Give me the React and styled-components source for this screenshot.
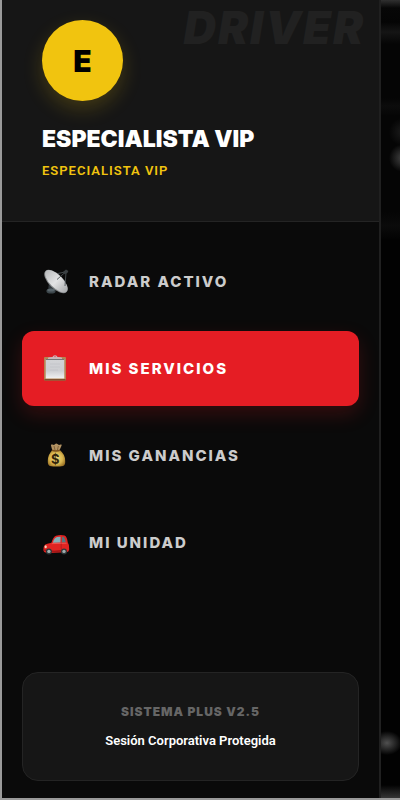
import React, { useState } from "react";
import styled, { createGlobalStyle, css } from "styled-components";

const menuList = [
  { id: "radar", label: "RADAR ACTIVO", Icon: RadarIcon },
  { id: "servicios", label: "MIS SERVICIOS", Icon: ClipboardIcon },
  { id: "ganancias", label: "MIS GANANCIAS", Icon: MoneyBagIcon },
  { id: "unidad", label: "MI UNIDAD", Icon: CarIcon },
];

function App() {
  const [active, setActive] = useState("servicios");

  return (
    <>
      <GlobalStyle />
      <StPage>
        <StDrawer>
          <StHeader>
            <StWatermark aria-hidden="true">DRIVER</StWatermark>
            <StAvatar>E</StAvatar>
            <StName>ESPECIALISTA VIP</StName>
            <StRole>ESPECIALISTA VIP</StRole>
          </StHeader>
          <StMenu>
            {menuList.map(({ id, label, Icon }) => (
              <StMenuButton
                key={id}
                type="button"
                $active={active === id}
                onClick={() => setActive(id)}
              >
                <Icon />
                {label}
              </StMenuButton>
            ))}
          </StMenu>
          <StFooter>
            <StVersion>SISTEMA PLUS V2.5</StVersion>
            <StSession>Sesión Corporativa Protegida</StSession>
          </StFooter>
        </StDrawer>
        <StBackdrop />
      </StPage>
    </>
  );
}

export default App;

function RadarIcon() {
  return (
    <StIcon viewBox="0 0 28 28" aria-hidden="true">
      <defs>
        <linearGradient id="dish" x1="0" y1="0" x2="1" y2="0">
          <stop offset="0" stopColor="#b9bbbd" />
          <stop offset="0.5" stopColor="#e3e4e5" />
          <stop offset="1" stopColor="#a9abad" />
        </linearGradient>
      </defs>
      <path d="M7 14 L12 16 L14 22 L6 23 Z" fill="#30373b" />
      <ellipse cx="9" cy="23" rx="4.6" ry="2.6" fill="#3c464b" />
      <ellipse cx="9" cy="22" rx="3.6" ry="1.5" fill="#59656b" />
      <ellipse
        cx="14"
        cy="13.5"
        rx="15"
        ry="7.2"
        transform="rotate(45 14 13.5)"
        fill="#85888a"
      />
      <ellipse
        cx="14.3"
        cy="13.2"
        rx="14.5"
        ry="6.4"
        transform="rotate(45 14.3 13.2)"
        fill="url(#dish)"
      />
      <path
        d="M15 11.5 L23.5 4 M16 5.5 L23 4 M23 18 L24 4.5"
        stroke="#4b5256"
        strokeWidth="0.9"
        fill="none"
      />
      <path d="M21 4 L24 1.6 L26.4 3 L25.4 5 L22.6 6.2 Z" fill="#3b4043" />
    </StIcon>
  );
}

function ClipboardIcon() {
  return (
    <StIcon viewBox="0 0 28 28" aria-hidden="true">
      <defs>
        <linearGradient id="paper" x1="0" y1="0" x2="0" y2="1">
          <stop offset="0" stopColor="#d2d3d6" />
          <stop offset="0.6" stopColor="#cdced2" />
          <stop offset="1" stopColor="#f1f1f2" />
        </linearGradient>
      </defs>
      <rect x="2" y="2" width="22" height="23.5" rx="1" fill="#b58452" />
      <rect x="2.5" y="24" width="21" height="1.5" fill="#80502f" />
      <rect x="3.7" y="4" width="18.6" height="19.5" fill="url(#paper)" />
      <rect x="3.7" y="4" width="18.6" height="1" fill="#747678" />
      <path
        d="M6 4 V3 Q6 2.3 8 2.2 L10.5 2 Q11 0.2 13 0.2 T15.5 2 L18 2.2 Q20 2.3 20 3 V4 Z"
        fill="#c9b7b9"
      />
      <circle cx="13" cy="1.6" r="0.7" fill="#e93a43" />
      <path d="M8 9 H18 M8 12 H18 M8 15 H16" stroke="#c1c3c8" strokeWidth="0.8" />
    </StIcon>
  );
}

function MoneyBagIcon() {
  return (
    <StIcon viewBox="0 0 28 28" aria-hidden="true">
      <defs>
        <radialGradient id="bag" cx="0.48" cy="0.5" r="0.6">
          <stop offset="0" stopColor="#f1da7d" />
          <stop offset="0.6" stopColor="#d9b64f" />
          <stop offset="1" stopColor="#956b22" />
        </radialGradient>
      </defs>
      <path
        d="M10.2 8 L9 3.6 Q8.5 2 10.4 2.5 L12 3 L13.6 1.7 Q14.5 1.2 15.4 1.9 L17 3 L18.7 2.6 Q20.2 2.3 19.5 3.8 L17.6 8 Z"
        fill="#b39363"
      />
      <path d="M12 4 L13 8 M16.4 4 L15.4 8" stroke="#765730" strokeWidth="0.8" />
      <path
        d="M10.5 8 Q5.8 12.5 5.8 18.8 Q5.6 23 7.8 24 Q14.5 25.2 21.2 24 Q23.5 23 23.2 18.8 Q23 12 17.6 8 Z"
        fill="url(#bag)"
      />
      <path d="M9.8 8.2 Q14 9.8 18.2 8.2" stroke="#7b511f" strokeWidth="1.4" fill="none" />
      <text
        x="14.3"
        y="21.6"
        textAnchor="middle"
        fontFamily="Inter, sans-serif"
        fontSize="13"
        fontWeight="700"
        fill="#33260c"
      >
        $
      </text>
    </StIcon>
  );
}

function CarIcon() {
  return (
    <StIcon viewBox="0 0 28 28" aria-hidden="true">
      <path
        d="M1.6 18.6 Q2 15.6 5.4 14.8 L9.4 13.8 Q11.2 7.8 14 6.8 Q18.6 5.4 22.6 6.6 Q25 7.8 25.8 13.4 Q27.6 15.6 27.2 20.4 Q26.8 22.8 24.4 23.2 L5 24 Q1.4 23.6 1.4 20.8 Z"
        fill="#e02422"
      />
      <path d="M10.8 13.8 Q12.2 8.8 15 8 L18.6 7.7 L18.4 13.6 Z" fill="#83b0b8" />
      <path d="M20 7.8 L22 8.2 Q23.4 10 23.8 13.2 L19.8 13.5 Z" fill="#547980" />
      <path d="M9.8 14.6 L24.6 14.2" stroke="#f4605a" strokeWidth="0.8" />
      <path d="M19.2 14.5 Q19 18.6 19.4 20.6" stroke="#a91718" strokeWidth="0.7" fill="none" />
      <path d="M2.2 21 Q10 23 19 21.8" stroke="#8d1013" strokeWidth="1.2" fill="none" />
      <ellipse cx="3.7" cy="17.8" rx="1.1" ry="1.5" fill="#f4d6ba" />
      <circle cx="6.9" cy="22.4" r="3" fill="#30383a" />
      <circle cx="6.9" cy="22.4" r="1.7" fill="#9fafaf" />
      <circle cx="22" cy="22.4" r="3" fill="#30383a" />
      <circle cx="22" cy="22.4" r="1.7" fill="#9fafaf" />
    </StIcon>
  );
}

const GlobalStyle = createGlobalStyle`
  * {
    box-sizing: border-box;
  }

  body {
    margin: 0;
    background-color: #9a9a9a;
    font-family: Inter, "Liberation Sans", sans-serif;
  }
`;

const StPage = styled.div`
  display: flex;
  min-height: 100vh;
  padding: 0 0 2px 2px;
`;

const StDrawer = styled.aside`
  flex: 1;
  display: flex;
  flex-direction: column;
  background-color: #0a0a0a;
  border-right: 2px solid #202020;
`;

const StBackdrop = styled.div`
  width: 19px;
  background:
    radial-gradient(circle 14px at 22px 132px, #1c1c1c, transparent),
    radial-gradient(circle 14px at 22px 158px, #444, transparent),
    radial-gradient(ellipse 15px 12px at 6px 743px, #505050, transparent),
    linear-gradient(
      #303030 0,
      #070707 8px,
      #050505 22px,
      #151515 32px,
      #050505 44px,
      #050505 98px,
      #0c0c0c 106px,
      #050505 116px,
      #050505 212px,
      #0b0b0b 226px,
      #020202 240px,
      #020202 785px,
      #353535 100%
    );
`;

const StHeader = styled.header`
  position: relative;
  height: 222px;
  padding: 20px 40px 0;
  background-color: #161616;
  border-bottom: 1px solid #242424;
`;

const StWatermark = styled.span`
  position: absolute;
  top: 0;
  right: 14px;
  font-size: 45px;
  line-height: 55px;
  font-weight: 900;
  font-style: italic;
  letter-spacing: 2px;
  color: #212121;
`;

const StAvatar = styled.div`
  display: flex;
  justify-content: center;
  align-items: center;
  width: 81px;
  height: 81px;
  margin-bottom: 24px;
  border-radius: 50%;
  background-color: #f1c40f;
  box-shadow: 0 8px 20px rgba(241, 196, 15, 0.2);
  color: #000;
  font-size: 30px;
  font-weight: 900;
`;

const StName = styled.h2`
  margin: 0 0 8px;
  font-size: 23px;
  line-height: 28px;
  font-weight: 900;
  white-space: nowrap;
  color: #fff;
`;

const StRole = styled.p`
  margin: 0;
  font-family: Roboto, sans-serif;
  font-size: 13px;
  line-height: 20px;
  font-weight: 600;
  letter-spacing: 1px;
  color: #f1c40f;
`;

const StMenu = styled.nav`
  flex: 1;
  display: flex;
  flex-direction: column;
  gap: 12px;
  padding: 22px 20px;
`;

const StMenuButton = styled.button`
  display: flex;
  align-items: center;
  gap: 19px;
  height: 75px;
  padding: 0 20px;
  border: none;
  border-radius: 12px;
  background-color: transparent;
  color: #ccc;
  font-family: inherit;
  font-size: 15px;
  font-weight: 800;
  letter-spacing: 2px;
  text-align: left;
  cursor: pointer;

  ${({ $active }) =>
    $active &&
    css`
      background-color: #e51d24;
      box-shadow: 0 8px 20px rgba(229, 29, 36, 0.2);
      color: #fff;
    `}
`;

const StIcon = styled.svg`
  flex: none;
  width: 28px;
  height: 28px;
`;

const StFooter = styled.footer`
  margin: 0 20px 17px;
  padding: 29px 16px 27px;
  border: 1px solid #242424;
  border-radius: 16px;
  background-color: #161616;
  text-align: center;
`;

const StVersion = styled.p`
  margin: 0 0 7px;
  font-size: 12px;
  line-height: 20px;
  font-weight: 900;
  letter-spacing: 1px;
  color: #666;
`;

const StSession = styled.p`
  margin: 0;
  font-family: Roboto, sans-serif;
  font-size: 13px;
  line-height: 24px;
  font-weight: 600;
  color: #fff;
`;
